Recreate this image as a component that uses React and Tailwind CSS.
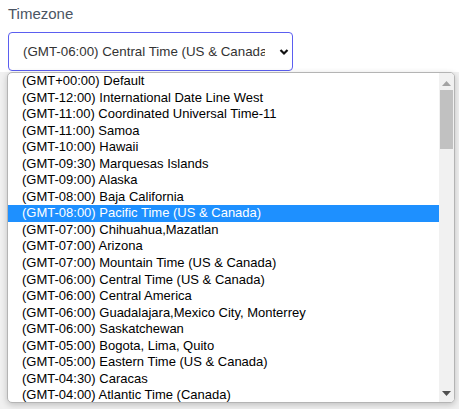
const zones = [
  "(GMT+00:00) Default",
  "(GMT-12:00) International Date Line West",
  "(GMT-11:00) Coordinated Universal Time-11",
  "(GMT-11:00) Samoa",
  "(GMT-10:00) Hawaii",
  "(GMT-09:30) Marquesas Islands",
  "(GMT-09:00) Alaska",
  "(GMT-08:00) Baja California",
  "(GMT-08:00) Pacific Time (US & Canada)",
  "(GMT-07:00) Chihuahua,Mazatlan",
  "(GMT-07:00) Arizona",
  "(GMT-07:00) Mountain Time (US & Canada)",
  "(GMT-06:00) Central Time (US & Canada)",
  "(GMT-06:00) Central America",
  "(GMT-06:00) Guadalajara,Mexico City, Monterrey",
  "(GMT-06:00) Saskatchewan",
  "(GMT-05:00) Bogota, Lima, Quito",
  "(GMT-05:00) Eastern Time (US & Canada)",
  "(GMT-04:30) Caracas",
  "(GMT-04:00) Atlantic Time (Canada)",
];

export default function App() {
  return (
    <div className="w-[459px] h-[409px] overflow-hidden bg-white font-['Liberation_Sans',Arial,sans-serif]">
      <div className="px-[8px] pt-[4px]">
        <label className="block text-[15px] leading-[20px] text-[#4b5563]">Timezone</label>
        <div className="mt-[8px] w-[285px] h-[39px] border border-[#5b5ef0] rounded-[4px] flex items-center pl-[14px] pr-[3px]">
          <span className="w-[242px] overflow-hidden whitespace-nowrap text-[13.33px] text-[#333]">
            (GMT-06:00) Central Time (US &amp; Canada)
          </span>
          <svg className="ml-auto" width="10" height="8" viewBox="0 0 10 8">
            <path d="M1.5 2 L5 5.5 L8.5 2" fill="none" stroke="#111" strokeWidth="2.2" />
          </svg>
        </div>
      </div>
      <div className="mt-[1px] bg-[#f0f0f0] h-[340px] px-[7px] pb-[6px]">
        <div className="relative w-[448px] h-[331px] bg-white border border-[#b4b4b4] rounded-[5px] overflow-hidden shadow-[0_2px_6px_rgba(0,0,0,0.2)] flex">
          <ul className="flex-1 text-[13px] text-black">
            {zones.map((z, i) => (
              <li
                key={z}
                className={
                  "h-[16.55px] leading-[16.55px] pl-[14px] whitespace-nowrap " +
                  (i === 8 ? "bg-[#1e90ff] text-white" : "")
                }
              >
                {z}
              </li>
            ))}
          </ul>
          <div className="w-[15px] bg-[#f1f1f1] flex flex-col items-center">
            <svg className="mt-[8px]" width="9" height="5" viewBox="0 0 9 5">
              <path d="M0 5 L4.5 0 L9 5 Z" fill="#a3a3a3" />
            </svg>
            <div className="mt-[4px] w-[13px] h-[59px] bg-[#c1c1c1]" />
            <svg className="mt-auto mb-[6px]" width="9" height="5" viewBox="0 0 9 5">
              <path d="M0 0 L9 0 L4.5 5 Z" fill="#505050" />
            </svg>
          </div>
        </div>
      </div>
    </div>
  );
}
